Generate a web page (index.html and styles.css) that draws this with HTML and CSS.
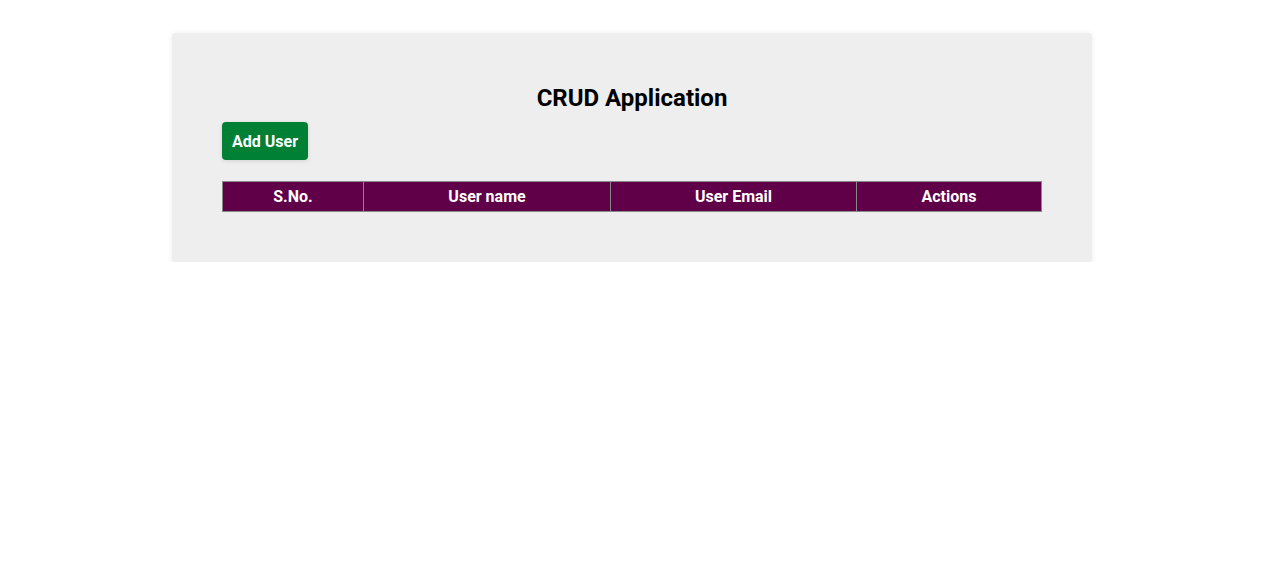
FILE: index.html
```html
<!DOCTYPE html>
<html>
<head>
<meta charset="utf-8">
<link rel="stylesheet" href="styles.css">
</head>
<body>
<div class="card">
  <h2 class="title">CRUD Application</h2>
  <button class="add-btn">Add User</button>
  <table class="users">
    <thead>
      <tr>
        <th class="c1">S.No.</th>
        <th class="c2">User name</th>
        <th class="c3">User Email</th>
        <th class="c4">Actions</th>
      </tr>
    </thead>
  </table>
</div>
</body>
</html>
```
FILE: styles.css
```css
body {
  margin: 0;
  background: #fff;
  font-family: Roboto, "Liberation Sans", sans-serif;
}
.card {
  box-sizing: border-box;
  width: 920px;
  margin: 33px 0 0 172px;
  padding: 51px 50px 50px;
  background: #eeeeee;
  border-radius: 4px;
  box-shadow: 0 1px 6px rgba(0,0,0,0.08);
}
.title {
  margin: 0;
  text-align: center;
  font-size: 24px;
  font-weight: 700;
  line-height: 28px;
  color: #000;
}
.add-btn {
  display: block;
  margin-top: 10px;
  height: 38px;
  padding: 0 10px;
  width: 86px;
  background: #008035;
  color: #fff;
  border: none;
  border-radius: 4px;
  font-family: Roboto, "Liberation Sans", sans-serif;
  font-size: 16px;
  font-weight: 700;
  box-shadow: 0 1px 4px rgba(0,0,0,0.12);
}
.users {
  margin-top: 21px;
  width: 820px;
  border-collapse: collapse;
  table-layout: fixed;
}
.users th {
  background: #600048;
  color: #fff;
  border: 1px solid #888;
  height: 29px;
  padding: 0;
  font-size: 16px;
  font-weight: 700;
  text-align: center;
}
.c1 { width: 140px; }
.c2 { width: 246px; }
.c3 { width: 245px; }
```
